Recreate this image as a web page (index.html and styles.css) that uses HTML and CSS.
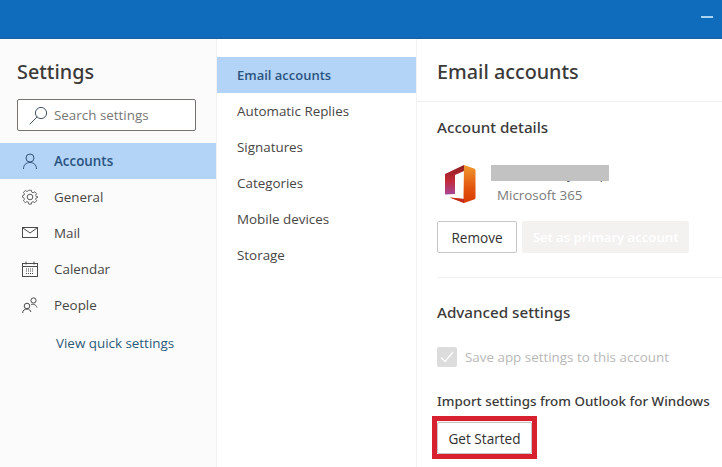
FILE: index.html
```html
<!DOCTYPE html>
<html lang="en">
<head>
<meta charset="utf-8">
<title>Settings</title>
<link rel="stylesheet" href="styles.css">
</head>
<body>
<header class="topbar"><span class="minimize"></span></header>
<div class="panes">
  <nav class="left">
    <h1 class="title">Settings</h1>
    <div class="search">
      <svg class="search-icon" width="20" height="20" viewBox="0 0 20 20" fill="none" stroke="#44546a" stroke-width="1"><circle cx="12" cy="8" r="5.6"/><path d="M8 12l-7 7" stroke-linecap="round"/></svg>
      <span>Search settings</span>
    </div>
    <ul class="nav-list">
      <li class="nav-item active">
        <svg width="16" height="16" viewBox="0 0 16 16" fill="none" stroke="#2f5378" stroke-width="1"><circle cx="8" cy="5" r="4"/><path d="M1.500 16c0-4 2.500-6.500 6.500-6.500s6.500 2.500 6.500 6.500"/></svg>
        <span>Accounts</span>
      </li>
      <li class="nav-item">
        <svg width="16" height="16" viewBox="0 0 16 16" fill="none" stroke="#5a5a5a" stroke-width="1"><circle cx="8" cy="8" r="2.800"/><path d="M6.600.7h2.800l.4 2 1.500.7 1.800-1 2 2-1.100 1.700.7 1.500 2 .4v.1l-2 .7-.7 1.500 1.100 1.700-2 2-1.800-1.100-1.500.7-.4 2H6.600l-.4-2-1.500-.7-1.800 1.100-2-2 1.100-1.700-.7-1.500-1.600-.7V6.600l1.600-.4.700-1.500-1.100-1.700 2-2 1.800 1 1.500-.7z" transform="translate(.6 .6) scale(.93)"/></svg>
        <span>General</span>
      </li>
      <li class="nav-item">
        <svg width="16" height="12" viewBox="0 0 16 12" fill="none" stroke="#4a4a4a" stroke-width="1"><rect x=".5" y=".5" width="15" height="10"/><path d="M1 1l7 5 7-5"/></svg>
        <span>Mail</span>
      </li>
      <li class="nav-item">
        <svg width="16" height="16" viewBox="0 0 16 16" fill="none" stroke="#4a4a4a" stroke-width="1"><rect x=".5" y="2.500" width="15" height="13"/><path d="M.5 5.500h15M4 .5v3M12 .5v3"/><path d="M4 8h8M4 10h8M4 12.500h8" stroke-dasharray="1 1"/></svg>
        <span>Calendar</span>
      </li>
      <li class="nav-item">
        <svg width="16" height="16" viewBox="0 0 16 16" fill="none" stroke="#4a4a4a" stroke-width="1"><circle cx="5" cy="9" r="2.800"/><circle cx="11.500" cy="3.500" r="2.600"/><path d="M.7 16c0-2.500 1.800-4 4.300-4s3.500 1.500 3.800 3M9 7.500c2-.5 5-.2 6 3"/></svg>
        <span>People</span>
      </li>
    </ul>
    <a class="quick" href="#">View quick settings</a>
  </nav>
  <nav class="middle">
    <ul class="sub-list">
      <li class="sub-item active">Email accounts</li>
      <li class="sub-item">Automatic Replies</li>
      <li class="sub-item">Signatures</li>
      <li class="sub-item">Categories</li>
      <li class="sub-item">Mobile devices</li>
      <li class="sub-item">Storage</li>
    </ul>
  </nav>
  <main class="right">
    <h2 class="page-title">Email accounts</h2>
    <section class="section details">
      <h3 class="section-title">Account details</h3>
      <div class="account">
        <svg class="office" width="32" height="39" viewBox="0 0 32 39">
          <defs>
            <linearGradient id="oa" x1="0" y1="0" x2="0" y2="1"><stop offset="0" stop-color="#8e1f1f"/><stop offset=".55" stop-color="#c22a3a"/><stop offset="1" stop-color="#a8479a"/></linearGradient>
            <linearGradient id="ob" x1="0" y1="0" x2="0" y2="1"><stop offset="0" stop-color="#f0992e"/><stop offset=".6" stop-color="#e2550f"/><stop offset="1" stop-color="#d83b01"/></linearGradient>
          </defs>
          <path d="M1 9L20 0v6l-9 4v19L1 29.500z" fill="url(#oa)"/>
          <path d="M20 0l10 3.500c1 .4 1.500 1 1.500 2v27c0 1-.5 1.600-1.500 2L20 38l-14-5.500 13.500 1.500z" fill="url(#ob)"/>
          <path d="M6 32.500l14 1.500v4z" fill="#c4281b"/>
        </svg>
        <div class="account-text">
          <div class="name"><span>y</span><span>p</span><div class="mask"></div></div>
          <div class="provider">Microsoft 365</div>
        </div>
      </div>
      <div class="actions">
        <button class="btn remove" type="button">Remove</button>
        <button class="btn primary" type="button">Set as primary account</button>
      </div>
    </section>
    <section class="section advanced">
      <h3 class="section-title">Advanced settings</h3>
      <div class="check-row">
        <span class="check"><svg width="14" height="12" viewBox="0 0 14 12" fill="none" stroke="#fff" stroke-width="1.200"><path d="M1 6.500l4 4L13 1"/></svg></span>
        <span>Save app settings to this account</span>
      </div>
      <h4 class="import">Import settings from Outlook for Windows</h4>
      <div class="highlight"><button class="btn started" type="button">Get Started</button></div>
    </section>
  </main>
</div>
</body>
</html>
```
FILE: styles.css
```css
* { box-sizing: border-box; }
html, body { margin: 0; height: 100%; overflow: hidden; }
body {
  display: flex;
  flex-direction: column;
  font-family: "Open Sans", "Noto Sans", sans-serif;
  font-size: 13.400px;
  color: #444;
  background: #fff;
}
ul { list-style: none; margin: 0; padding: 0; }
h1, h2, h3, h4 { margin: 0; }

.topbar {
  height: 39px;
  flex: none;
  display: flex;
  justify-content: flex-end;
  padding: 16px 9px 0 0;
  background: linear-gradient(#0f6cbd, #0f6cbd 37px, #1d6096);
}
.minimize { width: 12px; height: 2px; background: #a9d3f5; }

.panes { flex: 1; display: flex; min-height: 0; }

.left {
  width: 217px;
  flex: none;
  background: #fbfbfb;
  border-right: 1px solid #f1f1f1;
}
.title {
  margin: 18px 0 0 17px;
  height: 30px;
  font-family: "Noto Sans", "Open Sans", sans-serif;
  font-size: 19.800px;
  line-height: 30px;
  font-weight: 500;
  color: #3b3a39;
}
.search {
  margin: 12px 0 12px 17px;
  width: 179px;
  height: 32px;
  display: flex;
  align-items: center;
  gap: 5px;
  padding-left: 11px;
  background: #fff;
  border: 1px solid #77726e;
  border-radius: 2px;
  color: #777;
}
.search-icon { flex: none; width: 20px; height: 20px; }
.nav-item {
  height: 36px;
  display: flex;
  align-items: center;
  gap: 16px;
  padding-left: 22px;
  color: #484644;
}
.nav-item svg { flex: none; }
.nav-item.active { background: #b3d4f6; color: #2a5380; font-weight: 600; }
.quick {
  display: block;
  margin: 11px 0 0 56px;
  line-height: 18px;
  color: #2c5a78;
  text-decoration: none;
}

.middle {
  width: 200px;
  flex: none;
  padding-top: 18px;
  border-right: 1px solid #f3f2f1;
}
.sub-item {
  height: 36px;
  display: flex;
  align-items: center;
  padding-left: 20px;
  color: #484644;
}
.sub-item.active { background: #b3d4f6; color: #2a5380; font-weight: 600; font-size: 13px; }

.right { flex: 1; min-width: 0; }
.page-title {
  height: 63px;
  padding: 18px 0 0 20px;
  font-family: "Noto Sans", "Open Sans", sans-serif;
  font-size: 19.800px;
  line-height: 30px;
  font-weight: 500;
  color: #3b3a39;
  border-bottom: 1px solid #f0efee;
}
.section { margin-left: 20px; }
.section-title {
  font-family: "Noto Sans", "Open Sans", sans-serif;
  font-size: 15.200px;
  line-height: 20px;
  font-weight: 500;
  color: #3b3a39;
}
.details { padding: 15px 0 24px; border-bottom: 1px solid #f0efee; }
.account { display: flex; margin: 28px 0 0 7px; height: 39px; }
.office { flex: none; }
.account-text { margin-left: 15px; }
.name {
  position: relative;
  display: flex;
  gap: 26px;
  width: 118px;
  height: 17px;
  padding-left: 76px;
  font-size: 13px;
  line-height: 18px;
  color: #555;
}
.mask { position: absolute; top: 0; left: 0; width: 118px; height: 16px; background: #c2c2c2; }
.provider { margin: 4px 0 0 6px; line-height: 18px; color: #7a7a7a; }
.actions { display: flex; gap: 5px; margin-top: 17px; }
.btn {
  height: 32px;
  padding: 0;
  font-family: "Open Sans", "Noto Sans", sans-serif;
  font-size: 13.600px;
  border-radius: 2px;
  background: #fff;
  color: #323130;
}
.remove { width: 80px; border: 1px solid #c8c6c4; }
.primary { width: 167px; border: 0; background: #f3f2f1; color: #fff; font-weight: 600; font-size: 13.200px; }
.advanced { padding-top: 24px; }
.check-row {
  display: flex;
  align-items: center;
  gap: 8px;
  margin-top: 25px;
  height: 20px;
  color: #b9b8b7;
}
.check {
  width: 20px;
  height: 20px;
  display: flex;
  align-items: center;
  justify-content: center;
  background: #dcdcdc;
  border-radius: 2px;
}
.import {
  margin-top: 24px;
  font-family: "Noto Sans", "Open Sans", sans-serif;
  font-size: 13.400px;
  line-height: 20px;
  font-weight: 500;
  color: #3b3a39;
}
.highlight {
  width: 105px;
  height: 43px;
  margin: 5px 0 0 -5px;
  border: 5px solid #d8212e;
  background: #f4f4f4;
  padding-top: 1px;
}
.started {
  display: block;
  width: 95px;
  height: 32px;
  border: 1px solid #c8c6c4;
}
```
